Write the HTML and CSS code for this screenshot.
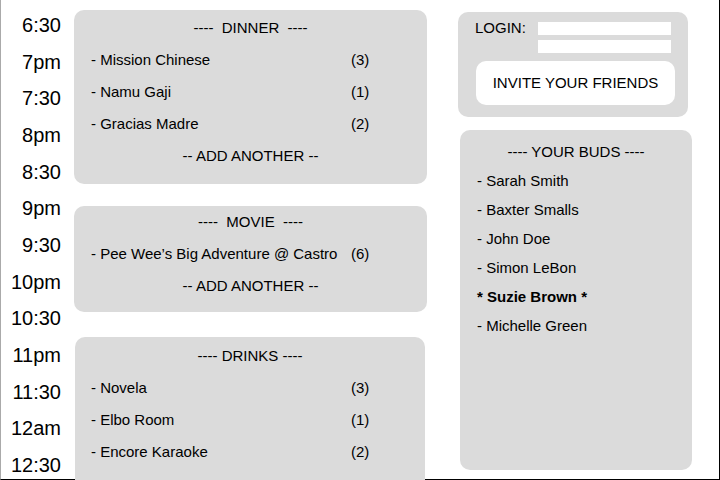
FILE: index.html
```
<!DOCTYPE html>
<html lang="en">
<head>
<meta charset="utf-8">
<meta name="viewport" content="width=device-width, initial-scale=1">
<title>Tonight</title>
<link rel="stylesheet" href="styles.css">
</head>
<body>
<div class="frame">
  <ol class="times">
    <li>6:30</li><li>7pm</li><li>7:30</li><li>8pm</li><li>8:30</li><li>9pm</li><li>9:30</li><li>10pm</li><li>10:30</li><li>11pm</li><li>11:30</li><li>12am</li><li>12:30</li>
  </ol>
  <main class="plan">
    <section class="panel event dinner">
      <h2>----&nbsp; DINNER &nbsp;----</h2>
      <ul>
        <li><span>- Mission Chinese</span><span>(3)</span></li>
        <li><span>- Namu Gaji</span><span>(1)</span></li>
        <li><span>- Gracias Madre</span><span>(2)</span></li>
      </ul>
      <button class="add" type="button">-- ADD ANOTHER --</button>
    </section>
    <section class="panel event movie">
      <h2>----&nbsp; MOVIE &nbsp;----</h2>
      <ul>
        <li><span>- Pee Wee’s Big Adventure @ Castro</span><span>(6)</span></li>
      </ul>
      <button class="add" type="button">-- ADD ANOTHER --</button>
    </section>
    <section class="panel event drinks">
      <h2>---- DRINKS ----</h2>
      <ul>
        <li><span>- Novela</span><span>(3)</span></li>
        <li><span>- Elbo Room</span><span>(1)</span></li>
        <li><span>- Encore Karaoke</span><span>(2)</span></li>
      </ul>
    </section>
  </main>
  <aside class="side">
    <form class="panel login">
      <div class="login-row">
        <label for="user">LOGIN:</label>
        <div class="fields">
          <input id="user" type="text">
          <input id="pass" type="password" aria-label="Password">
        </div>
      </div>
      <button class="invite" type="button">INVITE YOUR FRIENDS</button>
    </form>
    <section class="panel buds">
      <h2>---- YOUR BUDS ----</h2>
      <ul>
        <li>- Sarah Smith</li>
        <li>- Baxter Smalls</li>
        <li>- John Doe</li>
        <li>- Simon LeBon</li>
        <li class="me">* Suzie Brown *</li>
        <li>- Michelle Green</li>
      </ul>
    </section>
  </aside>
</div>
</body>
</html>
```
FILE: styles.css
```
* { box-sizing: border-box; }

body {
  margin: 0;
  background: #fff;
  color: #000;
  font: 15px/32px "Liberation Sans", Arial, sans-serif;
  overflow: hidden;
}

h2, ul, ol { margin: 0; padding: 0; list-style: none; }

h2 { font-size: 15px; font-weight: 400; text-align: center; }

button, input { font: inherit; color: inherit; border: 0; padding: 0; }

.frame {
  display: grid;
  grid-template-columns: 60px 366fr 292fr;
  min-height: 100vh;
  border: 1px solid #000;
  border-top: 0;
  border-left-color: #aaa;
}

.times {
  display: flex;
  flex-direction: column;
  justify-content: space-between;
  padding: 13px 0 2px;
  font-size: 20px;
  line-height: 24px;
  text-align: right;
}

.plan {
  display: flex;
  flex-direction: column;
  padding: 10px 0 0 13px;
}

.panel { background: #dbdbdb; border-radius: 10px; }

.dinner { padding: 2px 0 12px; margin-bottom: 22px; }

.movie { padding: 0 0 10px; margin-bottom: 25px; }

.drinks {
  flex: 1;
  margin: 0 2px -1px 1px;
  padding-top: 3px;
  border-radius: 10px 10px 0 0;
}

.event li {
  display: grid;
  grid-template-columns: 1fr 76px;
  padding-left: 17px;
}

.drinks li { padding-left: 16px; grid-template-columns: 1fr 74px; }

.add {
  display: block;
  margin: 0 auto;
  background: none;
  line-height: 32px;
}

.side {
  display: flex;
  flex-direction: column;
  padding: 12px 27px 9px 31px;
}

.login { margin: 0 4px 13px 0; padding: 10px 14px 12px 17px; }

.login-row { display: flex; justify-content: space-between; margin: 0 3px 8px 0; }

.login label { line-height: 12px; }

.fields { display: grid; gap: 5px; width: 133px; }

.fields input { width: 100%; height: 13px; background: #fff; border-radius: 0; }

.invite {
  display: block;
  width: 100%;
  height: 44px;
  margin-left: 1px;
  background: #fff;
  border-radius: 10px;
}

.buds { flex: 1; margin-left: 2px; padding: 7px 0; line-height: 29px; }

.buds li { padding-left: 17px; }

.me { font-weight: 700; }
```
